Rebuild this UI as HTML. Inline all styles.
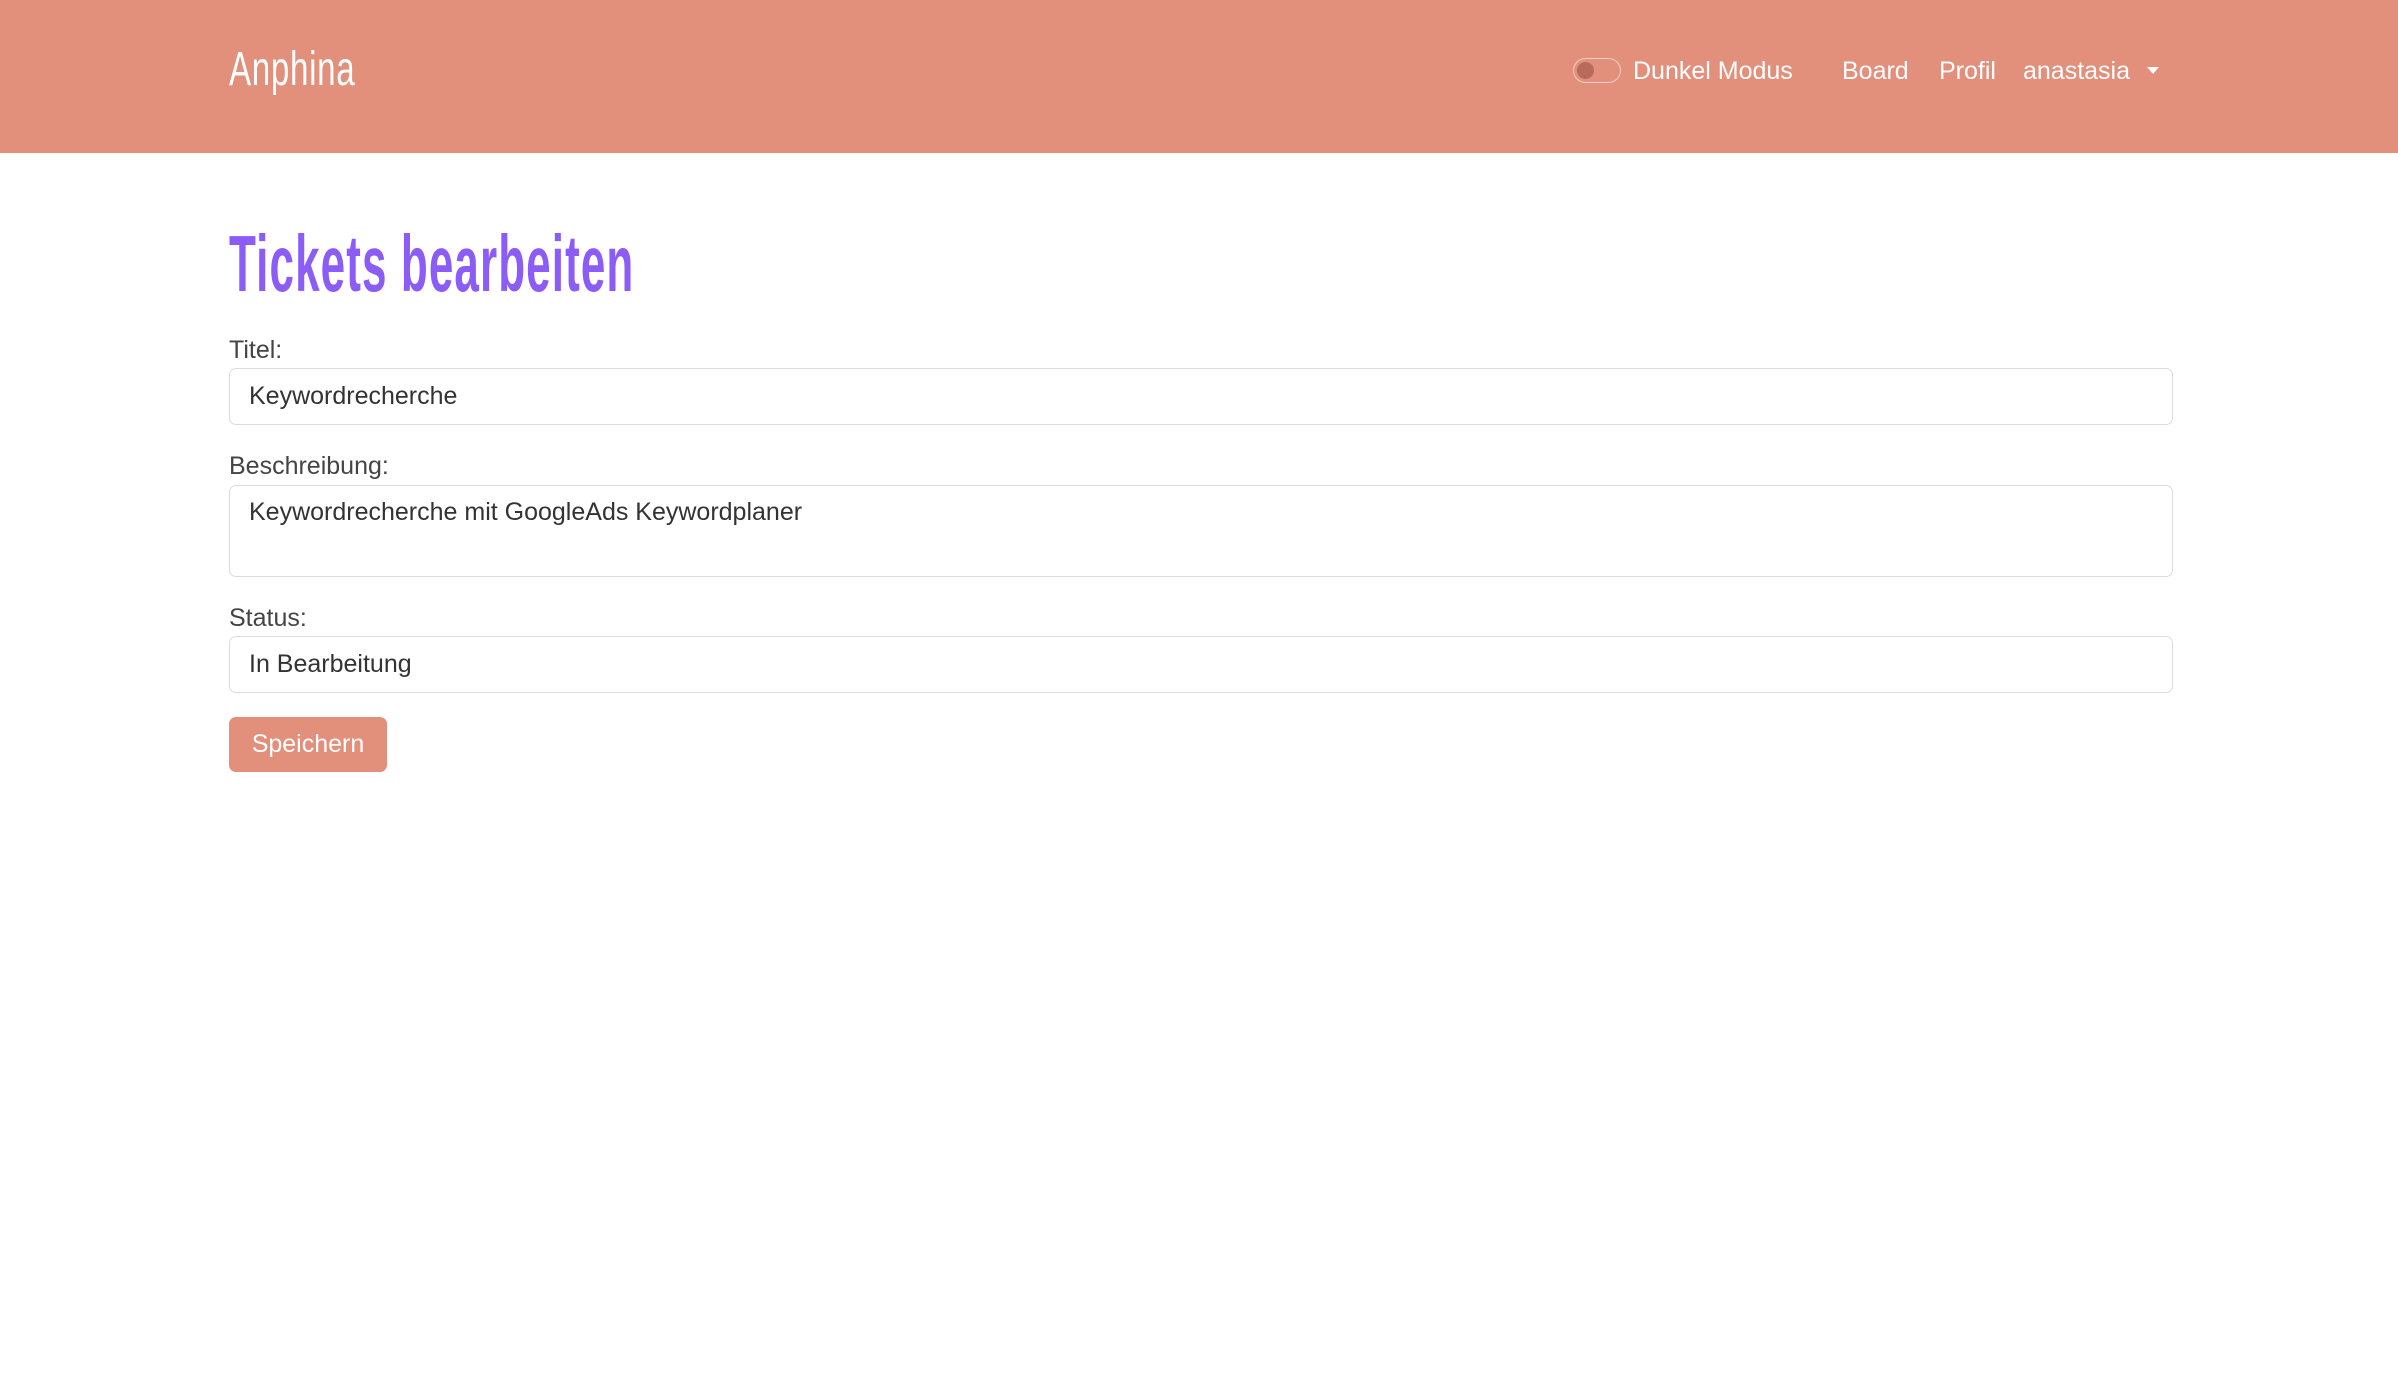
<!DOCTYPE html>
<html><head><meta charset="utf-8"><style>
*{box-sizing:border-box;margin:0;padding:0}
body{width:2398px;height:1395px;background:#fff;font-family:"Liberation Sans",sans-serif;color:#333;position:relative;overflow:hidden}
.nav{position:absolute;left:0;top:0;width:2398px;height:153px;background:#e28f7b}
.abs{position:absolute;white-space:nowrap}
.logo{left:229px;top:42px;font-size:48px;color:#fff;transform:scaleX(0.69);transform-origin:left top;letter-spacing:1px}
.nt{color:#fff;font-size:25px;top:57px;font-weight:300}
.tog{left:1573px;top:58px;width:48px;height:25px;border:1.5px solid #f3d0c6;border-radius:13px}
.tog:after{content:"";position:absolute;left:3px;top:3px;width:17px;height:17px;border-radius:50%;background:#b86a5d}
.caret{left:2147px;top:67px;border-left:6px solid transparent;border-right:6px solid transparent;border-top:7px solid #fff}
h1{position:absolute;left:229px;top:218px;font-size:80px;font-weight:bold;color:#8b5cf6;transform:scaleX(0.55);transform-origin:left top;white-space:nowrap;letter-spacing:2px}
.lab{left:229px;font-size:25px;color:#444}
.inp{position:absolute;left:229px;width:1944px;border:1.5px solid #dcdcdc;border-radius:7px;font-size:25px;color:#333;padding-left:19px}
.btn{position:absolute;left:229px;top:717px;width:158px;height:55px;background:#e28f7b;border-radius:7px;color:#fff;font-size:25px;text-align:center;line-height:55px}
</style></head><body>
<div class="nav">
<div class="abs logo">Anphina</div>
<div class="abs tog"></div>
<div class="abs nt" style="left:1633px">Dunkel Modus</div>
<div class="abs nt" style="left:1842px">Board</div>
<div class="abs nt" style="left:1939px">Profil</div>
<div class="abs nt" style="left:2023px">anastasia</div>
<div class="abs caret"></div>
</div>
<h1>Tickets bearbeiten</h1>
<div class="abs lab" style="top:336px">Titel:</div>
<div class="inp" style="top:368px;height:57px;line-height:55px">Keywordrecherche</div>
<div class="abs lab" style="top:452px">Beschreibung:</div>
<div class="inp" style="top:485px;height:92px;padding-top:12px">Keywordrecherche mit GoogleAds Keywordplaner</div>
<div class="abs lab" style="top:604px">Status:</div>
<div class="inp" style="top:636px;height:57px;line-height:55px">In Bearbeitung</div>
<div class="btn">Speichern</div>
</body></html>
